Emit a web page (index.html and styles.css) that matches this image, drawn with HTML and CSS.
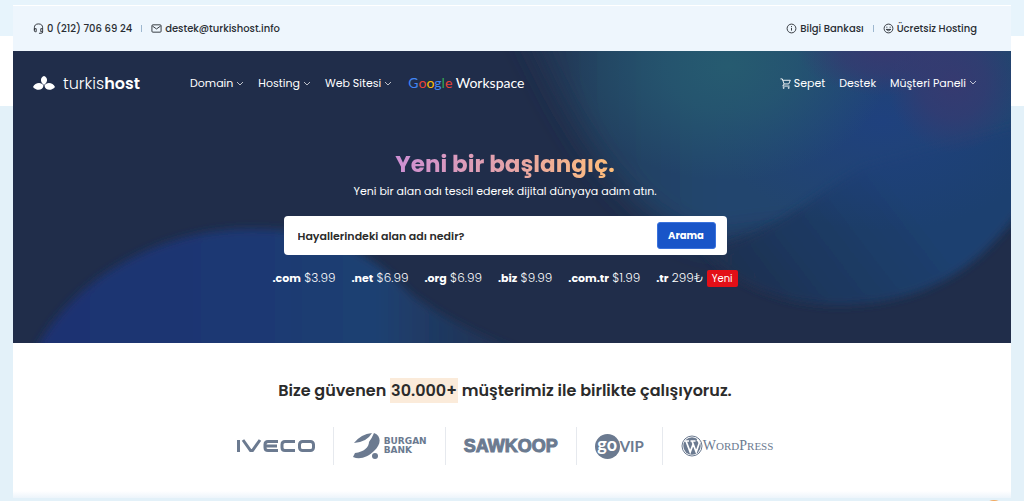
FILE: index.html
```html
<!DOCTYPE html>
<html lang="tr">
<head>
<meta charset="utf-8">
<meta name="viewport" content="width=device-width, initial-scale=1">
<title>turkishost</title>
<link rel="stylesheet" href="styles.css">
</head>
<body>
<div class="page">
  <div class="topbar">
    <div class="group">
      <a class="item" href="#"><svg class="icon" viewBox="0 0 12 12"><path d="M1.500 8V5.200a4.500 4.200 0 0 1 9 0V9.800q0 1.400-1.400 1.400H6.500M1.500 6.200h2v3.300h-1q-1 0-1-1zM10.500 6.200h-2v3.300h2"/></svg>0 (212) 706 69 24</a>
      <span class="sep"></span>
      <a class="item" href="#"><svg class="icon" viewBox="0 0 12 12"><rect x="1" y="2" width="10" height="8" rx="1"/><path d="M1.500 3.300 6 6.500l4.500-3.200"/></svg>destek@turkishost.info</a>
    </div>
    <div class="group">
      <a class="item" href="#"><svg class="icon" viewBox="0 0 12 12"><circle cx="6" cy="6" r="4.800"/><path d="M6 5.300v3M6 3.300v1"/></svg>Bilgi Bankası</a>
      <span class="sep"></span>
      <a class="item" href="#"><svg class="icon" viewBox="0 0 12 12"><circle cx="6" cy="6" r="4.800"/><path d="M3.500 7q2.500 3 5 0zM4.200 4v1.200M7.800 4v1.200"/></svg>Ücretsiz Hosting</a>
    </div>
  </div>

  <header class="hero">
    <svg class="hero-art" viewBox="0 0 998 292" preserveAspectRatio="none" aria-hidden="true">
      <defs>
        <filter id="soft" x="-20%" y="-20%" width="140%" height="140%"><feGaussianBlur stdDeviation="4"/></filter>
        <filter id="softer" x="-20%" y="-20%" width="140%" height="140%"><feGaussianBlur stdDeviation="14"/></filter>
        <linearGradient id="left"><stop offset="0" stop-color="#1e3272"/><stop offset=".45" stop-color="#1c3873"/><stop offset=".7" stop-color="#1d4172"/><stop offset="1" stop-color="#20395f" stop-opacity=".3"/></linearGradient>
        <linearGradient id="right" gradientUnits="userSpaceOnUse" x1="480" y1="0" x2="700" y2="0"><stop offset="0" stop-color="#202d4a"/><stop offset=".5" stop-color="#22405f"/><stop offset="1" stop-color="#21456e"/></linearGradient>
        <linearGradient id="fold" gradientUnits="userSpaceOnUse" x1="700" y1="240" x2="870" y2="110"><stop offset="0" stop-color="#202d4a"/><stop offset=".45" stop-color="#1f385f"/><stop offset="1" stop-color="#1f4070"/></linearGradient>
        <radialGradient id="teal"><stop offset="0" stop-color="#265b70"/><stop offset=".4" stop-color="#265b70" stop-opacity=".7"/><stop offset="1" stop-color="#265b70" stop-opacity="0"/></radialGradient>
        <radialGradient id="blue"><stop offset="0" stop-color="#1f417e"/><stop offset="1" stop-color="#1f417e" stop-opacity="0"/></radialGradient>
        <radialGradient id="purple"><stop offset="0" stop-color="#363a70"/><stop offset=".5" stop-color="#363a70" stop-opacity=".7"/><stop offset="1" stop-color="#363a70" stop-opacity="0"/></radialGradient>
      </defs>
      <path d="M22 300C65 220 155 178 237 178C315 178 355 200 400 245Q450 280 510 300Z" fill="url(#left)" filter="url(#soft)"/>
      <path d="M505-40H1100V100C990 190 850 165 700 192C630 175 570 110 505-40Z" fill="url(#right)" filter="url(#softer)"/>
      <path d="M690 200C760 185 790 150 850 115L1060 60C1010 170 960 250 830 254C780 255 730 240 690 200Z" fill="url(#fold)" filter="url(#soft)"/>
      <ellipse cx="870" cy="70" rx="170" ry="110" fill="url(#blue)"/>
      <ellipse cx="715" cy="15" rx="160" ry="115" fill="url(#teal)"/>
      <ellipse cx="870" cy="0" rx="85" ry="45" fill="url(#purple)"/>
      <ellipse cx="940" cy="32" rx="65" ry="70" fill="url(#purple)"/>
    </svg>
    <nav class="nav">
      <a class="brand" href="#"><svg class="leaf" viewBox="0 0 22 14"><path d="M11 9C6 5 8 1 11 0c3 1 5 5 0 9zM10.500 9.500C10 15 3 15 0 11c2-5 9-5 10.500-1.500zM11.500 9.500c.5 5.500 7.500 5.500 10.500 1.500-2-5-9-5-10.500-1.500z"/></svg><span>turkis<b>host</b></span></a>
      <div class="menu">
        <a class="item" href="#">Domain<svg class="chev" viewBox="0 0 8 8"><path d="M1 3l3 3 3-3"/></svg></a>
        <a class="item" href="#">Hosting<svg class="chev" viewBox="0 0 8 8"><path d="M1 3l3 3 3-3"/></svg></a>
        <a class="item" href="#">Web Sitesi<svg class="chev" viewBox="0 0 8 8"><path d="M1 3l3 3 3-3"/></svg></a>
        <a class="workspace" href="#"><span class="blue">G</span><span class="red">o</span><span class="yellow">o</span><span class="blue">g</span><span class="green">l</span><span class="red">e</span> Workspace</a>
      </div>
      <div class="account">
        <a class="item" href="#"><svg class="icon" viewBox="0 0 12 12"><path d="M.5 1H2.500L4.500 6.500H9.500L11.300 2.500H3M4.500 6.500 3 8.800H10.500"/><circle cx="4" cy="10.800" r=".6"/><circle cx="9.500" cy="10.800" r=".6"/></svg>Sepet</a>
        <a class="item" href="#">Destek</a>
        <a class="item" href="#">Müşteri Paneli<svg class="chev" viewBox="0 0 8 8"><path d="M1 2l3 3 3-3"/></svg></a>
      </div>
    </nav>
    <div class="pitch">
      <h1 class="title">Yeni bir başlangıç.</h1>
      <p class="lead">Yeni bir alan adı tescil ederek dijital dünyaya adım atın.</p>
      <form class="search">
        <input class="field" type="text" aria-label="Alan adı" placeholder="Hayallerindeki alan adı nedir?">
        <button class="go" type="button">Arama</button>
      </form>
      <ul class="prices">
        <li><b>.com</b> $3.99</li>
        <li><b>.net</b> $6.99</li>
        <li><b>.org</b> $6.99</li>
        <li><b>.biz</b> $9.99</li>
        <li><b>.com.tr</b> $1.99</li>
        <li><b>.tr</b> 299₺ <span class="new">Yeni</span></li>
      </ul>
    </div>
  </header>

  <main class="clients">
    <h2 class="heading">Bize güvenen <mark class="count">30.000+</mark> müşterimiz ile birlikte çalışıyoruz.</h2>
    <div class="logos">
      <div class="logo"><svg width="78" height="30" viewBox="0 0 78 30" role="img" aria-label="IVECO"><g fill="none" stroke="#6b7a90" stroke-width="3"><path d="M1.500 9v12M6 9l7.500 10.500h2L23 9M41 10.500H31q-3 0-3 3v3q0 3 3 3h10M28 15h12M58 10.500H48q-3 0-3 3v3q0 3 3 3h10"/><rect x="62.500" y="10.500" width="14" height="9" rx="3"/></g></svg></div>
      <div class="logo"><svg width="28" height="28" viewBox="0 0 28 28" aria-hidden="true"><path d="M2 11Q9 2 20 1 15 10 2 11zM22 1c8 3 7 12 0 18C16 25 8 28 1 25L3 21C12 20 17 15 17 10Q20 6 22 1z"/><circle cx="23" cy="24" r="3"/></svg><span class="burgan"><span>BURGAN</span><span>BANK</span></span></div>
      <div class="logo"><span class="sawkoop">SAWKOOP</span></div>
      <div class="logo"><span class="go-badge">go</span><span class="vip">VIP</span></div>
      <div class="logo"><svg width="22" height="22" viewBox="0 0 22 22" aria-hidden="true"><circle cx="11" cy="11" r="10" fill="none" stroke="#6b7a90"/><circle cx="11" cy="11" r="8.700"/><path d="M3.500 6H8M9.500 6h5M5 6l4.200 11L12 9.500M11 6l4.200 11L18.300 8Q18 6 16 4.500" fill="none" stroke="#fff" stroke-width="1.700"/></svg><span class="wordpress">W<small>ORD</small>P<small>RESS</small></span></div>
    </div>
  </main>
  <span class="bubble"></span>
</div>
</body>
</html>
```

FILE: styles.css
```css
* { box-sizing: border-box; }
body {
  margin: 0;
  min-height: 100vh;
  overflow: hidden;
  font-family: Poppins, Inter, "Noto Sans", sans-serif;
  background: linear-gradient(#e7f4fc 36px, #fff 36px 106px, #e3f1f9 106px);
}
a { color: inherit; text-decoration: none; }
svg { flex: none; }
.page { padding: 5px 13px 0; }
.topbar, .nav {
  display: flex;
  align-items: center;
  padding: 0 34px 0 20px;
}
.topbar {
  justify-content: space-between;
  height: 46px;
  border-top: 1px solid #fff;
  background: #eef6fd;
  color: #292d33;
  font-size: 10px;
  font-weight: 500;
}
.group, .menu, .account { display: flex; align-items: center; }
.group { gap: 9px; }
.item { display: flex; align-items: center; gap: 3px; white-space: nowrap; }
.sep { width: 1px; height: 7px; background: #9db7cf; }
.icon, .chev { fill: none; stroke: currentColor; stroke-width: 1; }
.icon { width: 11px; height: 11px; }
.chev { width: 8px; height: 8px; opacity: .7; }

.hero {
  position: relative;
  height: 292px;
  background: #202d4a;
  color: #fff;
}
.hero-art { position: absolute; inset: 0; width: 100%; height: 100%; }
.nav { position: relative; height: 64px; font-size: 11px; font-weight: 400; }
.brand { display: flex; align-items: center; gap: 8px; width: 157px; font-size: 16px; font-weight: 300; }
.leaf { width: 22px; height: 14px; fill: #fff; }
.brand b { font-weight: 600; }
.menu { gap: 14px; }
.workspace { margin-left: 2px; font: 400 14px/20px Lato, sans-serif; white-space: nowrap; }
.blue { color: #4285f4; }
.red { color: #ea4335; }
.yellow { color: #fbbc05; }
.green { color: #34a853; }
.account { gap: 14px; margin-left: auto; }

.pitch {
  position: relative;
  display: flex;
  flex-direction: column;
  align-items: center;
  padding: 32px 34px 0 20px;
}
.title {
  margin: 0;
  font-size: 23px;
  line-height: 34px;
  font-weight: 700;
  background: linear-gradient(90deg, #cd8fd3, #e5a3ab 50%, #ffbe78);
  background-clip: text;
  -webkit-background-clip: text;
  color: transparent;
}
.lead { margin: 0; font-size: 11px; line-height: 20px; }
.search {
  display: flex;
  align-items: center;
  width: 443px;
  max-width: 100%;
  height: 39px;
  margin-top: 15px;
  padding: 0 11px 0 14px;
  border-radius: 4px;
  background: #fff;
}
.field {
  flex: 1;
  min-width: 0;
  padding: 0;
  border: 0;
  outline: 0;
  background: none;
  font: 600 11px/16px Poppins, Inter, sans-serif;
}
.field::placeholder { color: #2b2b2b; opacity: 1; }
.go {
  width: 59px;
  height: 27px;
  padding: 0;
  border: 1px solid #3a72dc;
  border-radius: 3px;
  background: #1955c8;
  color: #fff;
  font: 700 10px/16px Poppins, Inter, sans-serif;
}
.prices {
  display: flex;
  gap: 16px;
  margin: 13px 0 0;
  padding: 0;
  list-style: none;
  font-size: 12px;
  line-height: 20px;
  font-weight: 300;
  white-space: nowrap;
}
.prices b { font-size: 11px; font-weight: 700; }
.new {
  display: inline-block;
  padding: 0 5px;
  border-radius: 2px;
  background: #e30f17;
  font-size: 10px;
  line-height: 17px;
  font-weight: 400;
}

.clients {
  height: 155px;
  padding: 35px 34px 0 20px;
  background: linear-gradient(#fff 148px, #edf4fb);
  color: #2b2b2b;
}
.heading { margin: 0; font-size: 16px; line-height: 26px; font-weight: 600; text-align: center; white-space: nowrap; }
.count { padding: 1px; background: #fbebda; color: inherit; }
.logos { display: flex; justify-content: center; margin-top: 23px; color: #6b7a90; }
.logo { display: flex; align-items: center; height: 38px; padding: 0 18px; }
.logo + .logo { border-left: 1px solid #e6e9ee; }
.logo svg { fill: #6b7a90; }
.burgan { display: grid; margin-left: 4px; font: 600 9px/9px "Liberation Sans", sans-serif; font-size: 10px; }
.burgan span { height: 9px; line-height: 9px; font-size: 9px; font-family: "DejaVu Sans", sans-serif; }
.sawkoop { font: 700 18px/24px "Liberation Sans", sans-serif; -webkit-text-stroke: 1px #6b7a90; }
.go-badge {
  width: 25px;
  height: 25px;
  border-radius: 50%;
  background: #6b7a90;
  color: #fff;
  font: 700 18px/21px Lato, sans-serif;
  text-align: center;
}
.vip { font: 700 15px/20px Lato, sans-serif; }
.wordpress { font: 400 14px/20px "Liberation Serif", serif; }
.wordpress small { font-size: 11px; }
.bubble {
  position: absolute;
  left: calc(100% - 42px);
  top: 500px;
  width: 24px;
  height: 24px;
  border-radius: 50%;
  background: #f3a75b;
}
```
